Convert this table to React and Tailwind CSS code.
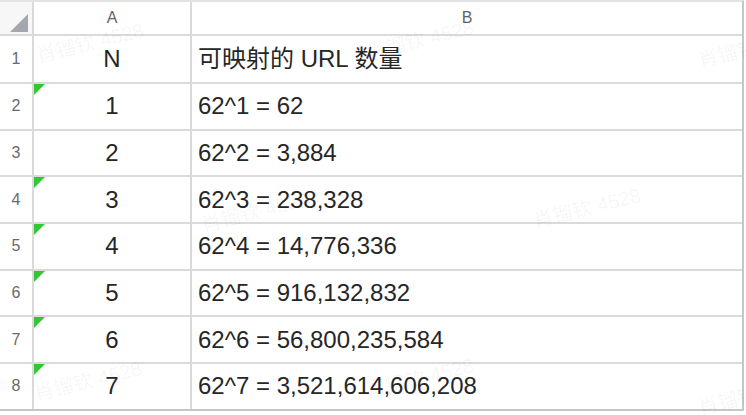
const rows = [
  { n: "N", b: "可映射的 URL 数量", flag: false, h: "h-[48px]" },
  { n: "1", b: "62^1 = 62", flag: true },
  { n: "2", b: "62^2 = 3,884", flag: false },
  { n: "3", b: "62^3 = 238,328", flag: true },
  { n: "4", b: "62^4 = 14,776,336", flag: true },
  { n: "5", b: "62^5 = 916,132,832", flag: true },
  { n: "6", b: "62^6 = 56,800,235,584", flag: true },
  { n: "7", b: "62^7 = 3,521,614,606,208", flag: true },
];

const marks = [
  { pos: "left-[90px] top-[43px]" },
  { pos: "left-[420px] top-[40px]" },
  { pos: "left-[752px] top-[48px]" },
  { pos: "left-[255px] top-[212px]" },
  { pos: "left-[587px] top-[208px]" },
  { pos: "left-[88px] top-[381px]" },
  { pos: "left-[420px] top-[378px]" },
  { pos: "left-[752px] top-[395px]" },
];

const Flag = () => (
  <svg className="absolute left-0 top-0" width="11" height="11" viewBox="0 0 11 11">
    <polygon points="0,0 11,0 0,11" fill="#34c634" />
  </svg>
);

export default function App() {
  return (
    <div className="relative w-[746px] h-[415px] overflow-hidden bg-white font-['Liberation_Sans','Noto_Sans_CJK_SC',sans-serif]">
      <div className="w-[744px] border-t-2 border-r-2 border-t-[#e3e3e3] border-r-[#c6c6c6]">
        {/* header */}
        <div className="flex h-[34px] border-b-2 border-[#dadada]">
          <div className="relative w-[34px] shrink-0 border-r-2 border-[#dadada] bg-[#f7f7f7]">
            <svg className="absolute left-[10px] top-[12px]" width="18" height="18" viewBox="0 0 18 18">
              <polygon points="18,0 18,18 0,18" fill="#a4a8ad" />
            </svg>
          </div>
          <div className="flex w-[158px] shrink-0 items-center justify-center border-r-2 border-[#dadada] text-[16px] text-[#5f6368]">
            A
          </div>
          <div className="flex flex-1 items-center justify-center text-[16px] text-[#5f6368]">B</div>
        </div>

        {rows.map((r, i) => (
          <div
            key={i}
            className={`flex border-b-2 ${r.h || "h-[46.667px]"} ${
              i === rows.length - 1 ? "border-[#c6c6c6]" : "border-[#dadada]"
            }`}
          >
            <div className="flex w-[34px] shrink-0 items-center justify-center border-r-2 border-[#dadada] text-[16px] text-[#666a6f]">
              {i + 1}
            </div>
            <div className="relative flex w-[158px] shrink-0 items-center justify-center border-r-2 border-[#dadada] text-[24px] text-[#262626]">
              {r.flag && <Flag />}
              {r.n}
            </div>
            <div className="flex flex-1 items-center pl-[6px] text-[24px] text-[#262626] whitespace-nowrap">
              {r.b}
            </div>
          </div>
        ))}
      </div>

      {marks.map((m, i) => (
        <span
          key={i}
          className={`pointer-events-none absolute ${m.pos} -translate-x-1/2 -translate-y-1/2 rotate-[-14deg] whitespace-nowrap text-[20px] text-black/[0.05]`}
        >
          肖镏钦 4528
        </span>
      ))}
    </div>
  );
}
